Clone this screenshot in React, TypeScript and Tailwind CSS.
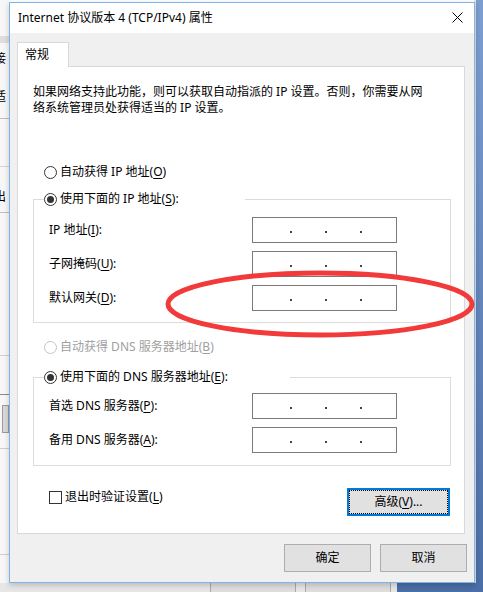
import React from "react";

const font = "font-['Noto_Sans','Noto_Sans_CJK_SC',sans-serif]";

function Radio({ checked, disabled }: { checked?: boolean; disabled?: boolean }) {
  return (
    <span
      className={`flex h-[13px] w-[13px] shrink-0 items-center justify-center rounded-full border bg-white ${
        disabled ? "border-[#c4c4c4]" : "border-[#333333]"
      }`}
    >
      {checked && <span className="h-[7px] w-[7px] rounded-full bg-[#333333]" />}
    </span>
  );
}

function Key({ k }: { k: string }) {
  return (
    <>
      (<u className="underline-offset-2">{k}</u>)
    </>
  );
}

function IpField() {
  return (
    <div className="flex h-[26px] w-[145px] items-center border border-[#7a7a7a] bg-white">
      <span className="w-[37px]" />
      <span className="mt-[3px] h-[2px] w-[2px] bg-[#444]" />
      <span className="w-[33px]" />
      <span className="mt-[3px] h-[2px] w-[2px] bg-[#444]" />
      <span className="w-[33px]" />
      <span className="mt-[3px] h-[2px] w-[2px] bg-[#444]" />
    </div>
  );
}

function FieldRow({ label }: { label: React.ReactNode }) {
  return (
    <div className="flex items-center">
      <div className="w-[203px] text-[12px] leading-[16px] text-black">{label}</div>
      <IpField />
    </div>
  );
}

function Group({
  legend,
  legendWidth,
  top,
  bottom,
  children,
}: {
  legend: React.ReactNode;
  legendWidth: string;
  top: string;
  bottom: string;
  children: React.ReactNode;
}) {
  return (
    <fieldset className={`ml-[15px] w-[418px] border border-[#dcdcdc] ${bottom}`}>
      <legend className={`ml-[10px] flex h-[16px] items-center gap-[3px] ${legendWidth}`}>
        <Radio checked />
        <span className="text-[12px] leading-[16px] text-black">{legend}</span>
      </legend>
      <div className={`flex flex-col gap-[8px] pl-[15px] ${top}`}>{children}</div>
    </fieldset>
  );
}

function Backdrop() {
  return (
    <>
      {/* left strip: window behind */}
      <div className="absolute left-0 top-0 h-[583px] w-[9px] overflow-hidden bg-[#f7f7f7]">
        <div className="absolute left-0 top-[36px] h-[7px] w-full bg-[#dedede]" />
        <div className="absolute left-[-6px] top-[50px] text-[12px] text-black">接</div>
        <div className="absolute left-[-6px] top-[88px] text-[12px] text-black">适</div>
        <div className="absolute left-0 top-[118px] h-px w-full bg-[#bdbdbd]" />
        <div className="absolute left-0 top-[166px] h-px w-full bg-[#d5d5d5]" />
        <div className="absolute left-[-6px] top-[188px] text-[12px] text-black">出</div>
        <div className="absolute left-0 top-[212px] h-px w-full bg-[#bdbdbd]" />
        <div className="absolute left-0 top-[355px] h-px w-full bg-[#d0d0d0]" />
        <div className="absolute left-0 top-[394px] h-px w-full bg-[#8a8a8a]" />
        <div className="absolute left-[2px] top-[405px] h-[28px] w-[7px] border border-[#9a9a9a] bg-[#d9d9d9]" />
        <div className="absolute left-0 top-[448px] h-px w-full bg-[#cfcfcf]" />
        <div className="absolute left-0 top-[554px] h-px w-full bg-[#cfcfcf]" />
      </div>
      {/* right strip: desktop */}
      <div className="absolute right-0 top-0 h-full w-[8px] bg-gradient-to-b from-[#7d9ed0] to-[#4b6ea6]" />
      <div className="absolute left-[474px] top-0 h-[585px] w-[2px] bg-[#e2e2e2]" />
      {/* bottom strip */}
      <div className="absolute bottom-0 left-0 flex h-[9px] w-[476px] bg-[#e6e6e6]">
        <div className="ml-[210px] h-full w-[86px] border-x border-[#a8a8a8] bg-[#dedede]" />
        <div className="ml-[9px] h-full w-[86px] border-x border-[#a8a8a8] bg-[#dedede]" />
        <div className="ml-auto h-full w-[79px] bg-[#4b6ea6]" />
      </div>
    </>
  );
}

export default function App() {
  return (
    <div className={`relative h-[592px] w-[483px] overflow-hidden bg-white ${font}`}>
      <Backdrop />

      {/* dialog window */}
      <div className="absolute left-[9px] top-[2px] flex h-[581px] w-[466px] flex-col border border-[#7eb4ea] bg-[#f0f0f0] shadow-[0_2px_6px_rgba(0,0,0,0.2)]">
        {/* title bar */}
        <div className="flex h-[30px] items-center justify-between bg-white pl-[8px] pr-[11px]">
          <span className="text-[12px] leading-[16px] text-black">Internet 协议版本 4 (TCP/IPv4) 属性</span>
          <svg width="11" height="11" viewBox="0 0 11 11" className="mb-[1px]">
            <path d="M0.5 0.5 L10.5 10.5 M10.5 0.5 L0.5 10.5" stroke="#000" strokeWidth="1" fill="none" />
          </svg>
        </div>

        {/* body */}
        <div className="flex flex-col pl-[7px] pt-[9px]">
          <div className="relative z-10 -mb-px flex h-[25px] w-[52px] items-center border border-b-0 border-[#d9d9d9] bg-white pl-[7px] text-[12px] text-black">
            常规
          </div>

          <div className="flex h-[468px] w-[448px] flex-col border border-[#d9d9d9] bg-white">
            <p className="ml-[15px] mt-[17px] text-[12px] leading-[16px] text-black">
              如果网络支持此功能，则可以获取自动指派的 IP 设置。否则，你需要从网
              <br />
              络系统管理员处获得适当的 IP 设置。
            </p>

            <div className="ml-[26px] mt-[48px] flex h-[16px] items-center gap-[3px]">
              <Radio />
              <span className="text-[12px] leading-[16px] text-black">
                自动获得 IP 地址<Key k="O" />
              </span>
            </div>

            <div className="mt-[11px]">
              <Group
                legendWidth="w-[201px]"
                top="mt-[10px]"
                bottom="pb-[11px]"
                legend={
                  <>
                    使用下面的 IP 地址<Key k="S" />:
                  </>
                }
              >
                <FieldRow
                  label={
                    <>
                      IP 地址<Key k="I" />:
                    </>
                  }
                />
                <FieldRow
                  label={
                    <>
                      子网掩码<Key k="U" />:
                    </>
                  }
                />
                <FieldRow
                  label={
                    <>
                      默认网关<Key k="D" />:
                    </>
                  }
                />
              </Group>
            </div>

            <div className="ml-[26px] mt-[16px] flex h-[16px] items-center gap-[3px]">
              <Radio disabled />
              <span className="text-[12px] leading-[16px] text-[#a0a0a0]">
                自动获得 DNS 服务器地址<Key k="B" />
              </span>
            </div>

            <div className="mt-[14px]">
              <Group
                legendWidth="w-[246px]"
                top="mt-[8px]"
                bottom="pb-[12px]"
                legend={
                  <>
                    使用下面的 DNS 服务器地址<Key k="E" />:
                  </>
                }
              >
                <FieldRow
                  label={
                    <>
                      首选 DNS 服务器<Key k="P" />:
                    </>
                  }
                />
                <FieldRow
                  label={
                    <>
                      备用 DNS 服务器<Key k="A" />:
                    </>
                  }
                />
              </Group>
            </div>

            <div className="mt-[22px] flex items-start justify-between pl-[31px] pr-[14px]">
              <div className="mt-[1px] flex h-[16px] items-center gap-[3px]">
                <span className="h-[13px] w-[13px] border border-[#333333] bg-white" />
                <span className="text-[12px] leading-[16px] text-black">
                  退出时验证设置<Key k="L" />
                </span>
              </div>
              <button className="h-[28px] w-[103px] border-2 border-[#0078d7] bg-[#e1e1e1] p-0">
                <span className="flex h-full w-full items-center justify-center border border-dotted border-black text-[12px] text-black">
                  高级<Key k="V" />...
                </span>
              </button>
            </div>
          </div>

          <div className="mt-[10px] flex justify-end gap-[9px] pr-[7px]">
            <button className="h-[28px] w-[87px] border border-[#adadad] bg-[#e1e1e1] text-[12px] text-black">
              确定
            </button>
            <button className="h-[28px] w-[87px] border border-[#adadad] bg-[#e1e1e1] text-[12px] text-black">
              取消
            </button>
          </div>
        </div>
      </div>

      {/* red annotation circle */}
      <svg className="pointer-events-none absolute left-0 top-0" width="483" height="592">
        <ellipse cx="320" cy="304" rx="152" ry="31" fill="none" stroke="#f23a3a" strokeWidth="5" />
      </svg>
    </div>
  );
}
